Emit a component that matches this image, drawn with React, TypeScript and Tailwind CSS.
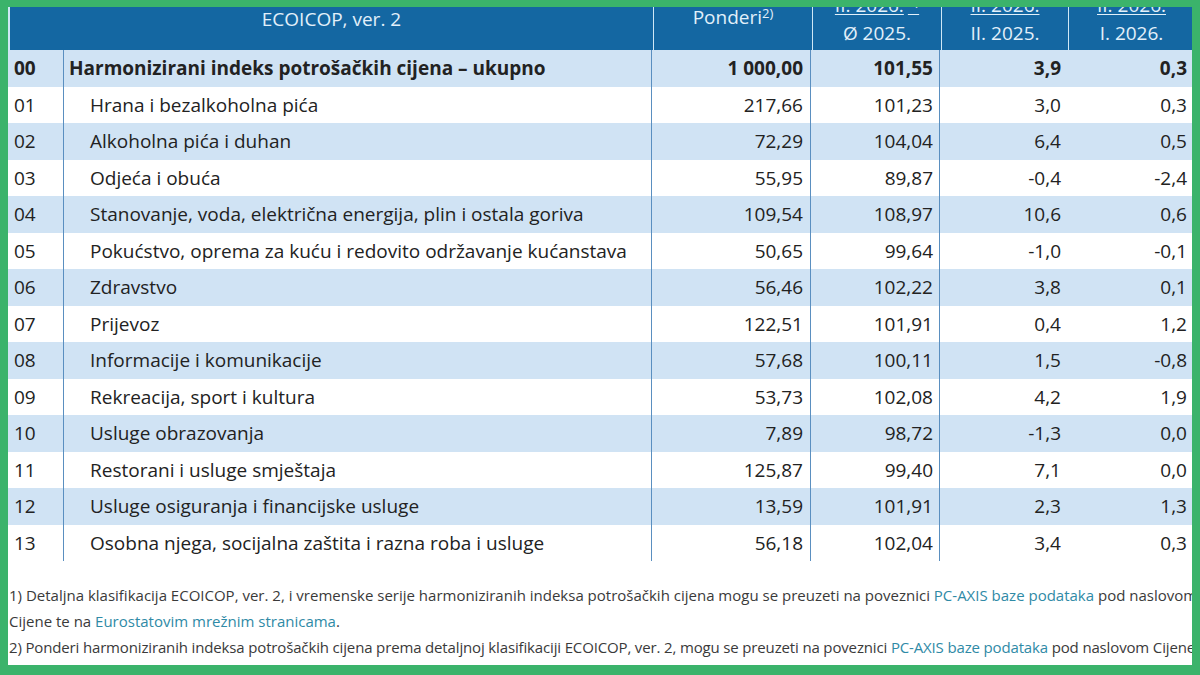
import React from "react";

type Row = { code: string; name: string; w: string; idx: string; yoy: string; mom: string };

const ROWS: Row[] = [
  { code: "00", name: "Harmonizirani indeks potrošačkih cijena – ukupno", w: "1 000,00", idx: "101,55", yoy: "3,9", mom: "0,3" },
  { code: "01", name: "Hrana i bezalkoholna pića", w: "217,66", idx: "101,23", yoy: "3,0", mom: "0,3" },
  { code: "02", name: "Alkoholna pića i duhan", w: "72,29", idx: "104,04", yoy: "6,4", mom: "0,5" },
  { code: "03", name: "Odjeća i obuća", w: "55,95", idx: "89,87", yoy: "-0,4", mom: "-2,4" },
  { code: "04", name: "Stanovanje, voda, električna energija, plin i ostala goriva", w: "109,54", idx: "108,97", yoy: "10,6", mom: "0,6" },
  { code: "05", name: "Pokućstvo, oprema za kuću i redovito održavanje kućanstava", w: "50,65", idx: "99,64", yoy: "-1,0", mom: "-0,1" },
  { code: "06", name: "Zdravstvo", w: "56,46", idx: "102,22", yoy: "3,8", mom: "0,1" },
  { code: "07", name: "Prijevoz", w: "122,51", idx: "101,91", yoy: "0,4", mom: "1,2" },
  { code: "08", name: "Informacije i komunikacije", w: "57,68", idx: "100,11", yoy: "1,5", mom: "-0,8" },
  { code: "09", name: "Rekreacija, sport i kultura", w: "53,73", idx: "102,08", yoy: "4,2", mom: "1,9" },
  { code: "10", name: "Usluge obrazovanja", w: "7,89", idx: "98,72", yoy: "-1,3", mom: "0,0" },
  { code: "11", name: "Restorani i usluge smještaja", w: "125,87", idx: "99,40", yoy: "7,1", mom: "0,0" },
  { code: "12", name: "Usluge osiguranja i financijske usluge", w: "13,59", idx: "101,91", yoy: "2,3", mom: "1,3" },
  { code: "13", name: "Osobna njega, socijalna zaštita i razna roba i usluge", w: "56,18", idx: "102,04", yoy: "3,4", mom: "0,3" },
];

const COLS = "grid grid-cols-[55px_588px_159px_129px_127px_126px]";

function TwoLine({ top, bottom, sup }: { top: string; bottom: string; sup?: string }) {
  return (
    <div className="flex h-[43px] flex-col items-center justify-end overflow-hidden border-l border-[#cfe8f6] pb-[5px]">
      <div className="mb-[4px] shrink-0 whitespace-nowrap leading-[24px] underline underline-offset-2">
        {top}
        {sup ? <sup className="ml-1 text-[13px]">{sup}</sup> : null}
      </div>
      <div className="shrink-0 whitespace-nowrap leading-[24px]">{bottom}</div>
    </div>
  );
}

function Link({ children }: { children: React.ReactNode }) {
  return <span className="text-[#2f8aa6]">{children}</span>;
}

export default function App() {
  return (
    <div
      className="h-[675px] w-[1200px] bg-[#3bb36b] pb-[10px] pl-[8px] pr-[8px] pt-[7px]"
      style={{ fontFamily: '"Open Sans", "Noto Sans", sans-serif' }}
    >
      <div className="h-full overflow-hidden bg-white text-[19px] text-[#222]">
        <div className={`${COLS} h-[43px] grid-rows-[43px] overflow-hidden border-l-2 border-[#cfe8f6] bg-[#1467a2] text-[#e2f0fa]`}>
          <div className="col-span-2 text-center leading-[24px]">ECOICOP, ver. 2</div>
          <div className="border-l border-[#cfe8f6] text-center leading-[20px]">
            Ponderi<sup className="text-[13px]">2)</sup>
          </div>
          <TwoLine top="II. 2026." bottom="Ø 2025." sup="1)" />
          <TwoLine top="II. 2026." bottom="II. 2025." />
          <TwoLine top="II. 2026." bottom="I. 2026." />
        </div>

        {ROWS.map((r, i) => {
          const bold = r.code === "00";
          return (
            <div
              key={r.code}
              className={`${COLS} h-[36.5px] items-stretch ${i % 2 === 0 ? "bg-[#d0e3f4]" : "bg-white"} ${bold ? "font-bold" : ""}`}
            >
              <div className="flex items-center pl-[6px]">{r.code}</div>
              <div className={`flex items-center whitespace-nowrap border-l border-[#5a8fc0] ${bold ? "pl-[5px]" : "pl-[26px]"}`}>
                {r.name}
              </div>
              <div className="flex items-center justify-end border-l border-[#5a8fc0] pr-[7px]">{r.w}</div>
              <div className="flex items-center justify-end border-l border-[#5a8fc0] pr-[6px]">{r.idx}</div>
              <div className="flex items-center justify-end border-l border-[#5a8fc0] pr-[5px]">{r.yoy}</div>
              <div className="flex items-center justify-end pr-[5px]">{r.mom}</div>
            </div>
          );
        })}

        <div className="mt-[21px] whitespace-nowrap pl-px text-[15px] leading-[26px] text-[#3a3a3a]">
          <div>
            1) Detaljna klasifikacija ECOICOP, ver. 2, i vremenske serije harmoniziranih indeksa potrošačkih cijena mogu se
            preuzeti na poveznici <Link>PC-AXIS baze podataka</Link> pod naslovom
          </div>
          <div>
            Cijene te na <Link>Eurostatovim mrežnim stranicama</Link>.
          </div>
          <div className="tracking-[-0.15px]">
            2) Ponderi harmoniziranih indeksa potrošačkih cijena prema detaljnoj klasifikaciji ECOICOP, ver. 2, mogu se
            preuzeti na poveznici <Link>PC-AXIS baze podataka</Link> pod naslovom Cijene
          </div>
        </div>
      </div>
    </div>
  );
}
